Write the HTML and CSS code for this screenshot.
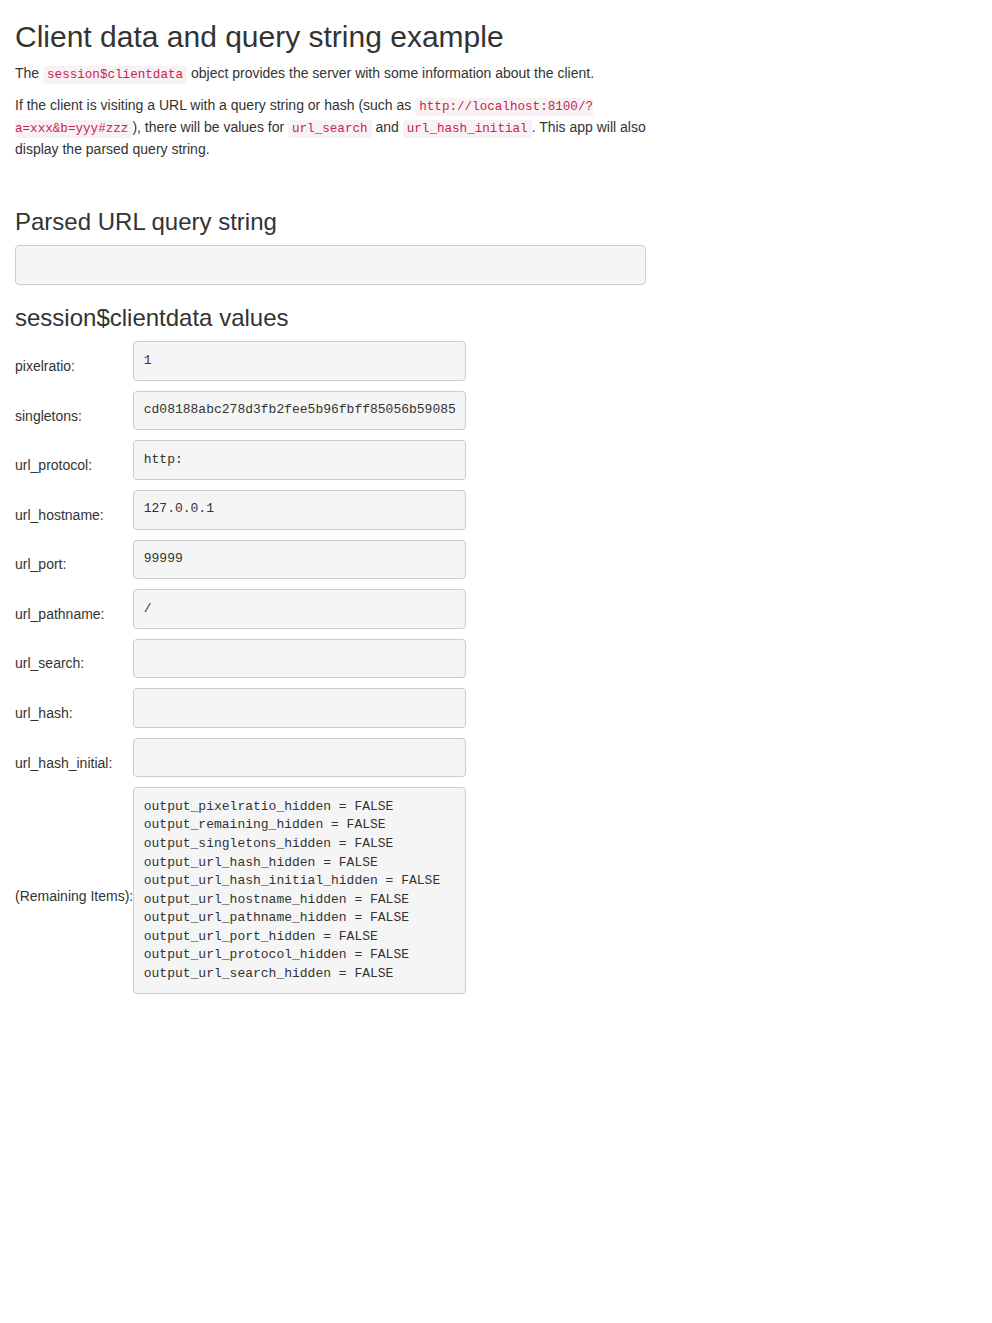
FILE: index.html
```html
<!DOCTYPE html>
<html>
<head>
<meta charset="utf-8">
<title>Client data and query string example</title>
<link rel="stylesheet" href="styles.css">
</head>
<body>
<div class="container">
  <div class="column">
    <h2 class="title">Client data and query string example</h2>
    <p>The <code>session$clientdata</code> object provides the server with some information about the client.</p>
    <p>If the client is visiting a URL with a query string or hash (such as <code>http://localhost:8100/?a=xxx&amp;b=yyy#zzz</code>), there will be values for <code>url_search</code> and <code>url_hash_initial</code>. This app will also display the parsed query string.</p>
    <br>
    <h3>Parsed URL query string</h3>
    <pre class="out"></pre>
    <h3>session$clientdata values</h3>
    <table class="values">
      <tr><td class="lbl">pixelratio:</td><td><pre class="out">1</pre></td></tr>
      <tr><td class="lbl">singletons:</td><td><pre class="out">cd08188abc278d3fb2fee5b96fbff85056b59085</pre></td></tr>
      <tr><td class="lbl">url_protocol:</td><td><pre class="out">http:</pre></td></tr>
      <tr><td class="lbl">url_hostname:</td><td><pre class="out">127.0.0.1</pre></td></tr>
      <tr><td class="lbl">url_port:</td><td><pre class="out">99999</pre></td></tr>
      <tr><td class="lbl">url_pathname:</td><td><pre class="out">/</pre></td></tr>
      <tr><td class="lbl">url_search:</td><td><pre class="out"></pre></td></tr>
      <tr><td class="lbl">url_hash:</td><td><pre class="out"></pre></td></tr>
      <tr><td class="lbl">url_hash_initial:</td><td><pre class="out"></pre></td></tr>
      <tr><td class="lbl">(Remaining Items):</td><td><pre class="out">output_pixelratio_hidden = FALSE
output_remaining_hidden = FALSE
output_singletons_hidden = FALSE
output_url_hash_hidden = FALSE
output_url_hash_initial_hidden = FALSE
output_url_hostname_hidden = FALSE
output_url_pathname_hidden = FALSE
output_url_port_hidden = FALSE
output_url_protocol_hidden = FALSE
output_url_search_hidden = FALSE</pre></td></tr>
    </table>
  </div>
</div>
</body>
</html>
```
FILE: styles.css
```css
html, body {
  margin: 0;
  padding: 0;
  background: #fff;
}
body {
  font-family: "Liberation Sans", Arial, sans-serif;
  font-size: 14px;
  line-height: 1.42857143;
  color: #333;
}
.container {
  padding: 0 15px;
}
.column {
  width: 631px;
}
h2, h3 {
  font-family: inherit;
  font-weight: 500;
  line-height: 1.1;
  color: inherit;
  margin: 20px 0 10px;
}
h2 {
  font-size: 30px;
}
h3 {
  font-size: 24px;
}
p {
  margin: 0 0 10px;
}
code, pre {
  font-family: "Liberation Mono", "Courier New", monospace;
}
code {
  padding: 2px 4px;
  font-size: 90%;
  color: #c7254e;
  background-color: #f9f2f4;
  border-radius: 4px;
}
pre.out {
  display: block;
  padding: 9.5px;
  margin: 0 0 10px;
  font-size: 13px;
  line-height: 1.42857143;
  color: #333;
  word-break: break-all;
  word-wrap: break-word;
  background-color: #f5f5f5;
  border: 1px solid #ccc;
  border-radius: 4px;
  white-space: pre;
}
pre.out:empty::before {
  content: " ";
}
table.values {
  border-collapse: collapse;
  border-spacing: 0;
}
table.values td {
  padding: 0;
  vertical-align: middle;
}
```
